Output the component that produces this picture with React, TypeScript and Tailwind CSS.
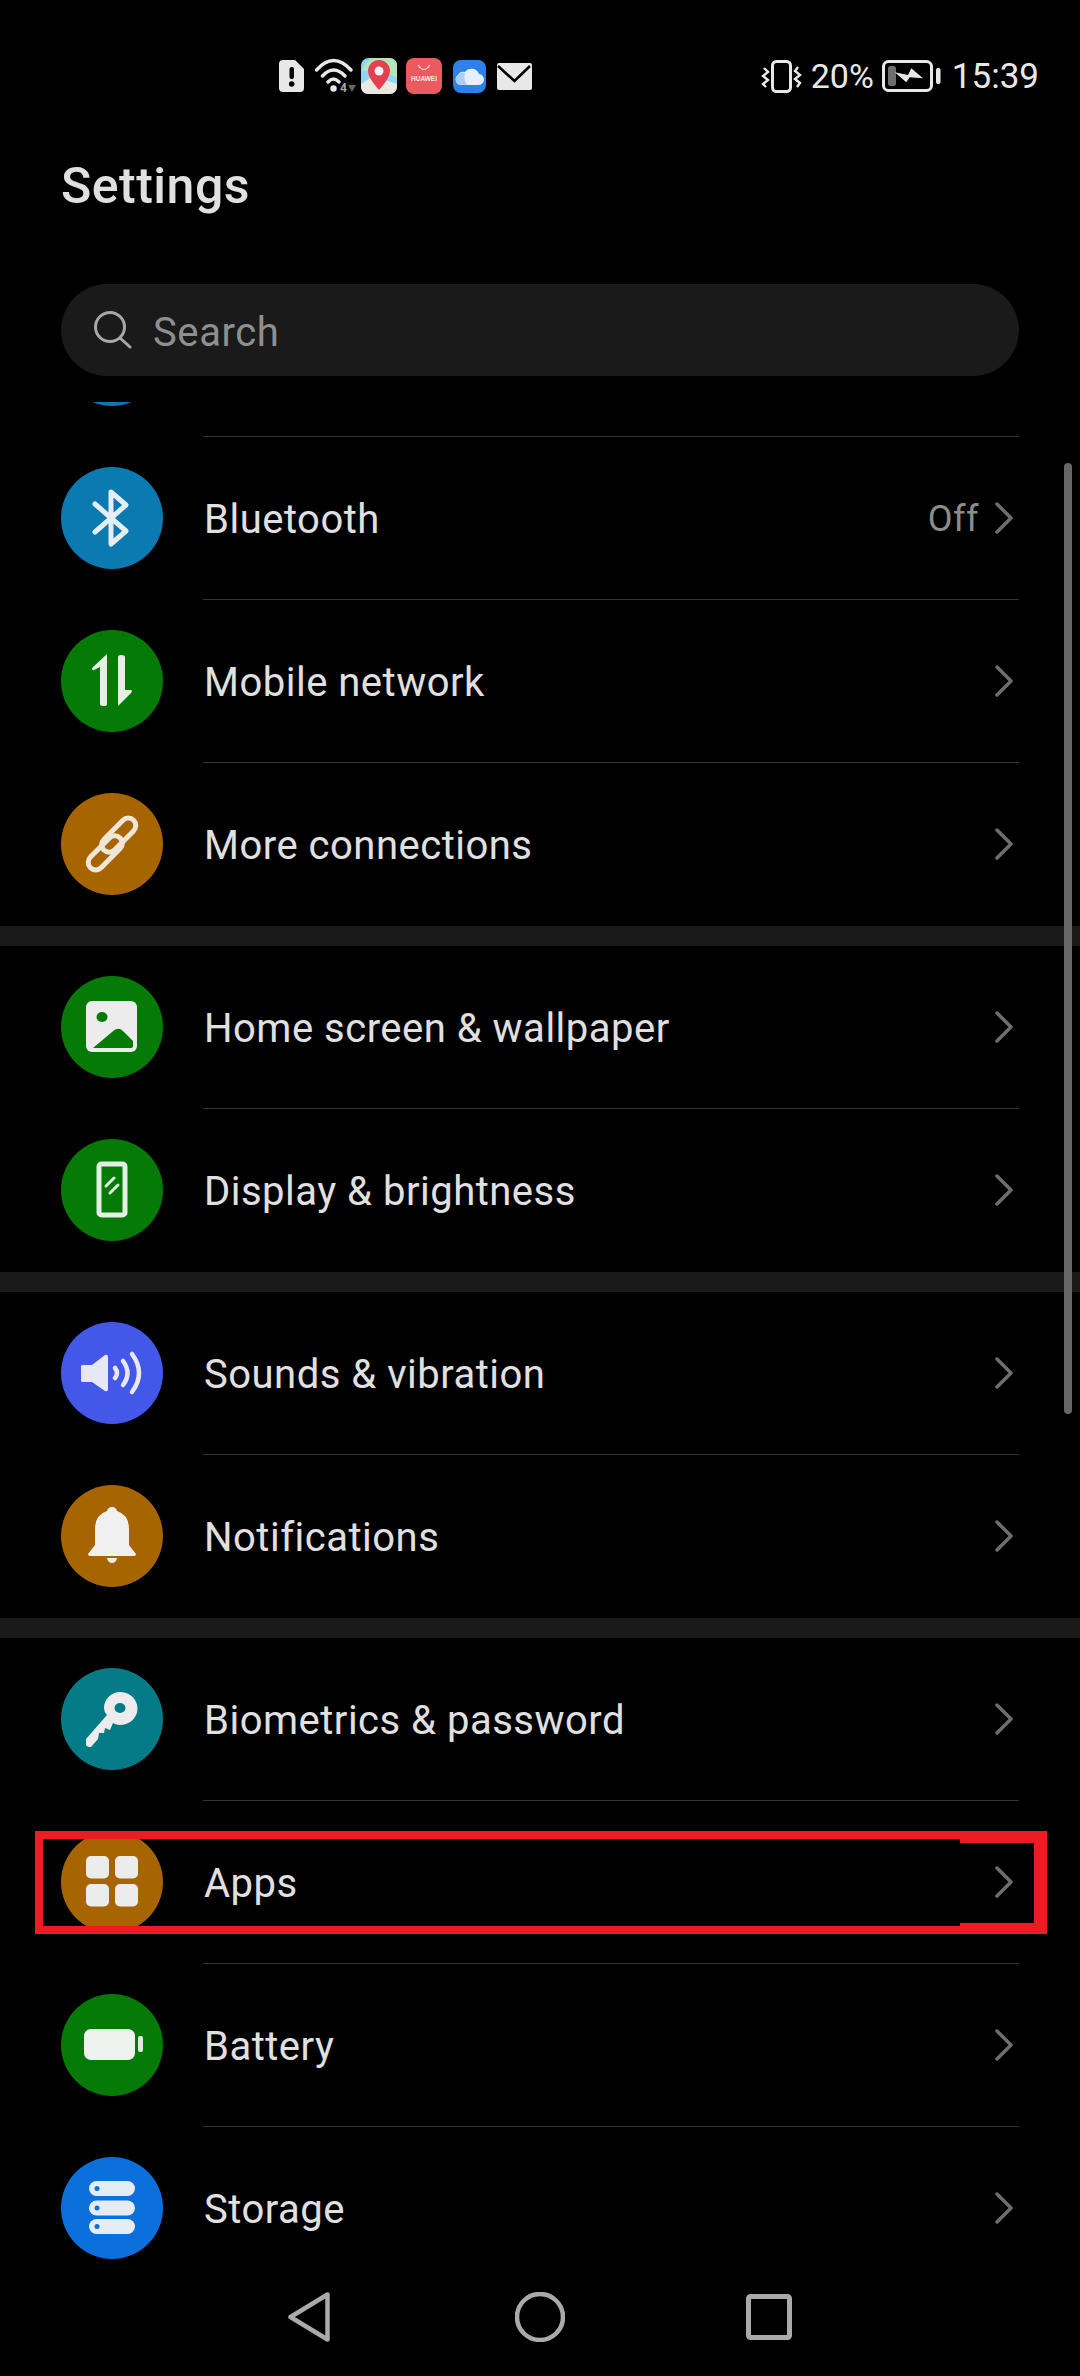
import React from "react";

const Ic = ({ children }: { children: React.ReactNode }) => (
  <svg viewBox="0 0 102 102" className="block w-[102px] h-[102px]" fill="none">{children}</svg>
);
const W = "#ececec";

const icons: Record<string, React.ReactNode> = {
  top: <Ic><rect /></Ic>,
  bt: <Ic><path d="M34 37 L65 64 L50 77 V25 L65 38 L34 65" stroke="#e4eef4" strokeWidth="5" strokeLinecap="round" strokeLinejoin="round" /></Ic>,
  net: <Ic><path d="M46 24 V74 Q46 76 43 76 Q39 76 39 74 V37 L33 40 Q31 41 31 38 Z" fill="#e4f0e4" /><path d="M57 27 Q57 25 60 25 Q64 25 64 27 V60 L70 60 Q72 61 70 63 L57 76 Z" fill="#e4f0e4" /></Ic>,
  link: <Ic><g stroke="#f0e6d8" strokeWidth="5" transform="rotate(-45 51 51)"><rect x="19" y="45" width="42" height="15" rx="7.5" /><rect x="41" y="42" width="42" height="15" rx="7.5" /></g></Ic>,
  image: <Ic><rect x="25" y="25" width="51" height="51" rx="6" fill={W} /><ellipse cx="41" cy="41" rx="5.5" ry="5" fill="#067a06" /><path d="M32 72 L51 56 Q57 50 62 55 L72 65 V70 Q72 72 70 72 Z" fill="#067a06" /></Ic>,
  phone: <Ic><rect x="38" y="25" width="26" height="51" rx="2.5" stroke="#e4f0e4" strokeWidth="5" /><path d="M45 47 L53 39 M49 54 L57 46" stroke="#e4f0e4" strokeWidth="3" strokeLinecap="round" /></Ic>,
  sound: <Ic><path d="M21 43 H31 L44 33 Q47 32 47 35 V67 Q47 70 44 69 L31 60 H21 Q20 60 20 58 V45 Q20 43 21 43 Z" fill="#e8e8f4" /><path d="M54 46 Q58 51 54 56 M62 39 Q71 51 62 63 M71 32 Q85 51 71 70" stroke="#e8e8f4" strokeWidth="4.5" strokeLinecap="round" /></Ic>,
  bell: <Ic><path d="M51 22 Q55 22 56 26 Q68 30 68 44 V60 L75 69 Q75 71 73 71 H29 Q27 71 27 69 L34 60 V44 Q34 30 46 26 Q47 22 51 22 Z" fill="#f0f0f0" /><path d="M46 73 H56 Q55 78 51 78 Q47 78 46 73 Z" fill="#f0f0f0" /></Ic>,
  key: <Ic><path fillRule="evenodd" d="M59 24 A17 16 0 1 1 59 57 Q55 57 52 55 L49 62 L44 60 L43 65 L38 65 L37 71 L30 79 Q26 79 25 77 L25 71 L46 47 Q43 44 43 40 A16 16 0 0 1 59 24 Z M59 35 A5.5 5 0 1 0 59 45 A5.5 5 0 1 0 59 35 Z" fill={W} /></Ic>,
  apps: <Ic><rect x="25" y="25" width="23" height="22.5" rx="5" fill={W} /><rect x="54" y="25" width="23" height="22.5" rx="5" fill={W} /><rect x="25" y="53" width="23" height="22.5" rx="5" fill={W} /><rect x="54" y="53" width="23" height="22.5" rx="5" fill={W} /></Ic>,
  battery: <Ic><rect x="23" y="35" width="51" height="31" rx="7" fill="#eef2ee" /><rect x="77" y="42" width="5" height="16" rx="2" fill="#dfeadf" /></Ic>,
  storage: <Ic>{[24, 43.5, 62].map((y) => (<g key={y}><rect x="28" y={y} width="46" height="15" rx="7.5" fill="#e6ecf4" /><circle cx="36" cy={y + 7.5} r="2.5" fill="#0b6fdc" /></g>))}</Ic>,
};

const Chevron = () => (
  <svg width="19" height="32" viewBox="0 0 19 32" fill="none" className="block shrink-0">
    <path d="M2 2 L16 16 L2 30" stroke="#6e6e6e" strokeWidth="3.5" strokeLinecap="round" strokeLinejoin="round" />
  </svg>
);

const Row = ({ icon, bg, label, value, last }: { icon: string; bg: string; label: string; value?: string; last?: boolean }) => (
  <div className="flex h-[163px] items-center pl-[61px] pr-[61px]">
    <div className={`w-[102px] h-[102px] rounded-full shrink-0 mr-[40px] -mt-[2px] ${bg}`}>{icons[icon]}</div>
    <div className={`flex-1 h-full flex items-center border-b pr-[5px] ${last ? "border-transparent" : "border-[#333333]"}`}>
      {label && <span className="text-[40px] tracking-[0.5px] text-[#e0e0e0] flex-1 whitespace-nowrap pl-px pt-[3px]">{label}</span>}
      {value && <span className="text-[36px] tracking-[0.5px] text-[#8c8c8c] mr-[16px] pt-[2px]">{value}</span>}
      {label && <Chevron />}
    </div>
  </div>
);

const Bar = () => <div className="h-[20px] bg-[#1a1a1a]" />;

const StatusLeft = () => (
  <div className="flex items-center">
    <svg width="25" height="32" viewBox="0 0 25 32" className="block mr-[11px]">
      <path d="M4 0 H16 L25 9 V28 Q25 32 21 32 H4 Q0 32 0 28 V4 Q0 0 4 0 Z" fill="#e8e8e8" />
      <rect x="10.5" y="7" width="4.5" height="12" rx="2" fill="#000" />
      <circle cx="12.7" cy="24" r="2.8" fill="#000" />
    </svg>
    <svg width="41" height="36" viewBox="0 0 41 36" fill="none" className="block mr-[5px]">
      <path d="M1.5 12 Q18.5 -7 36 12 M7.5 18 Q18.5 6 30 18 M13 24 Q18.5 18 24 24" stroke="#e8e8e8" strokeWidth="3.4" strokeLinecap="round" />
      <circle cx="18.5" cy="30.5" r="3.2" fill="#e8e8e8" />
      <text x="25" y="34" fontSize="12" fontWeight="700" fill="#aaa" fontFamily="Roboto, sans-serif">4</text>
      <path d="M33 27 H41 L37 34 Z" fill="#666" />
    </svg>
    <svg width="36" height="36" viewBox="0 0 36 36" className="block mr-[9px]">
      <rect width="36" height="36" rx="8" fill="#8fd6f0" />
      <path d="M0 26 L12 18 L36 26 V28 Q36 36 28 36 H8 Q0 36 0 28 Z" fill="#e9e9e2" />
      <path d="M0 12 L10 0 H28 Q36 0 36 8 V20 L24 14 Z" fill="#b4e6b8" />
      <path d="M18 32 Q7 20 7 13 A11 11 0 0 1 29 13 Q29 20 18 32 Z" fill="#e5404f" />
      <circle cx="18" cy="13" r="4.5" fill="#f6f6f6" />
    </svg>
    <div className="w-[36px] h-[36px] rounded-[8px] bg-[#ea5a5e] mr-[11px] flex flex-col items-center overflow-hidden">
      <svg width="14" height="8" viewBox="0 0 14 8" fill="none" className="block mt-[6px]"><path d="M1 1 Q7 10 13 1" stroke="#ffdcdc" strokeWidth="1.2" /></svg>
      <span className="text-[6.5px] leading-[8px] mt-[3px] font-bold text-[#ffe6e6] font-['Liberation_Sans']">HUAWEI</span>
    </div>
    <svg width="33" height="33" viewBox="0 0 33 33" className="block mr-[11px]">
      <rect width="33" height="33" rx="8" fill="#2f80ea" />
      <path d="M8 25 A5.5 5.5 0 0 1 5 15 A6 6 0 0 1 12 12 A8 8 0 0 1 26 14 A5.5 5.5 0 0 1 25 25 Z" fill="#e4f0fb" />
      <path d="M8 25 A5.5 5.5 0 0 1 5 15 A6 6 0 0 1 12 13 Q10 20 14 25 Z" fill="#a9cdf5" />
    </svg>
    <svg width="35" height="27" viewBox="0 0 35 27" fill="none" className="block">
      <rect width="35" height="27" rx="2" fill="#e8e8e8" />
      <path d="M1 3 L17.5 18 L33 3" stroke="#000" strokeWidth="2.6" />
    </svg>
  </div>
);

const StatusRight = () => (
  <div className="flex items-center text-[35px] text-[#e8e8e8] font-['Roboto',sans-serif] leading-none">
    <svg width="42" height="33" viewBox="0 0 42 33" fill="none" className="block mr-[8px]">
      <rect x="11.5" y="1.5" width="18" height="30" rx="4" stroke="#e8e8e8" strokeWidth="3" />
      <path d="M3 8 L7 12 L2 16 L7 20 L2 24 L5 27 M37 7 L34 11 L39 15 L34 19 L39 23 L36 27" stroke="#e8e8e8" strokeWidth="2.4" />
    </svg>
    <span className="mr-[8px] text-[34px]">20%</span>
    <svg width="59" height="32" viewBox="0 0 59 32" fill="none" className="block mr-[11px]">
      <rect x="1.5" y="1.5" width="48" height="29" rx="5" stroke="#e8e8e8" strokeWidth="3" />
      <rect x="6" y="6" width="8" height="20" rx="2.5" fill="#6e6e6e" />
      <path d="M12.7 12.3 L26 15 L29.3 8.3 L41 18.3 L27.7 17.3 L24.3 22.3 Z" fill="#e8e8e8" />
      <rect x="54" y="8" width="4.5" height="16" rx="2" fill="#e8e8e8" />
    </svg>
    <span>15:39</span>
  </div>
);

export default function App() {
  return (
    <div className="relative w-[1080px] h-[2376px] bg-black overflow-hidden flex flex-col font-['Roboto',sans-serif]">
      <div className="h-[112px] shrink-0 flex items-center justify-between pl-[279px] pr-[41px] pt-[40px]">
        <StatusLeft />
        <StatusRight />
      </div>
      <div className="shrink-0 px-[61px] h-[148px] flex items-center">
        <h1 className="text-[50px] font-medium tracking-[0.5px] text-[#e0e0e0]">Settings</h1>
      </div>
      <div className="shrink-0 mx-[61px] mt-[24px] h-[92px] rounded-full bg-[#1a1a1a] flex items-center pl-[32px]">
        <svg width="40" height="38" viewBox="0 0 40 38" fill="none" className="block mr-[20px]">
          <circle cx="17" cy="16" r="14.5" stroke="#a8a8a8" strokeWidth="3" />
          <path d="M27 27 L37 36" stroke="#a8a8a8" strokeWidth="3" strokeLinecap="round" />
        </svg>
        <span className="text-[40px] tracking-[0.6px] text-[#8f8f8f] pt-[5px]">Search</span>
      </div>
      <div className="mt-[26px] flex-1 min-h-0 overflow-hidden">
        <div className="-mt-[128px]">
          <Row icon="top" bg="bg-[#0a7ab0]" label="" />
          <Row icon="bt" bg="bg-[#0a7ab0]" label="Bluetooth" value="Off" />
          <Row icon="net" bg="bg-[#067a06]" label="Mobile network" />
          <Row icon="link" bg="bg-[#a66500]" label="More connections" last />
          <Bar />
          <Row icon="image" bg="bg-[#067a06]" label="Home screen & wallpaper" />
          <Row icon="phone" bg="bg-[#067a06]" label="Display & brightness" last />
          <Bar />
          <Row icon="sound" bg="bg-[#4358e8]" label="Sounds & vibration" />
          <Row icon="bell" bg="bg-[#a66500]" label="Notifications" last />
          <Bar />
          <Row icon="key" bg="bg-[#057b87]" label="Biometrics & password" />
          <Row icon="apps" bg="bg-[#a66500]" label="Apps" />
          <Row icon="battery" bg="bg-[#067a06]" label="Battery" />
          <Row icon="storage" bg="bg-[#0b6fdc]" label="Storage" last />
        </div>
      </div>
      <div className="shrink-0 h-[108px] flex items-start pt-[24px] pl-[288px] bg-black">
        <svg width="42" height="50" viewBox="0 0 42 50" fill="none" className="block mr-[185px]">
          <path d="M39.5 2.5 V47.5 L2.5 25 Z" stroke="#aaaaaa" strokeWidth="4.5" strokeLinejoin="round" />
        </svg>
        <svg width="50" height="50" viewBox="0 0 50 50" fill="none" className="block mr-[181px]">
          <circle cx="25" cy="25" r="23" stroke="#aaaaaa" strokeWidth="4.5" />
        </svg>
        <svg width="46" height="46" viewBox="0 0 46 46" fill="none" className="block mt-[2px]">
          <rect x="2.5" y="2.5" width="41" height="41" rx="2" stroke="#aaaaaa" strokeWidth="5" />
        </svg>
      </div>

      <div className="absolute left-[1064px] top-[463px] w-[8px] h-[951px] rounded-full bg-[#666666]" />
      <svg width="1012" height="103" viewBox="0 0 1012 103" className="absolute left-[35px] top-[1831px] block">
        <path fillRule="evenodd" fill="#ed1c24" d="M0 0 H1012 V103 H0 Z M8 8 V95 H925 V92 H999 V12 H925 V8 Z" />
      </svg>
    </div>
  );
}
